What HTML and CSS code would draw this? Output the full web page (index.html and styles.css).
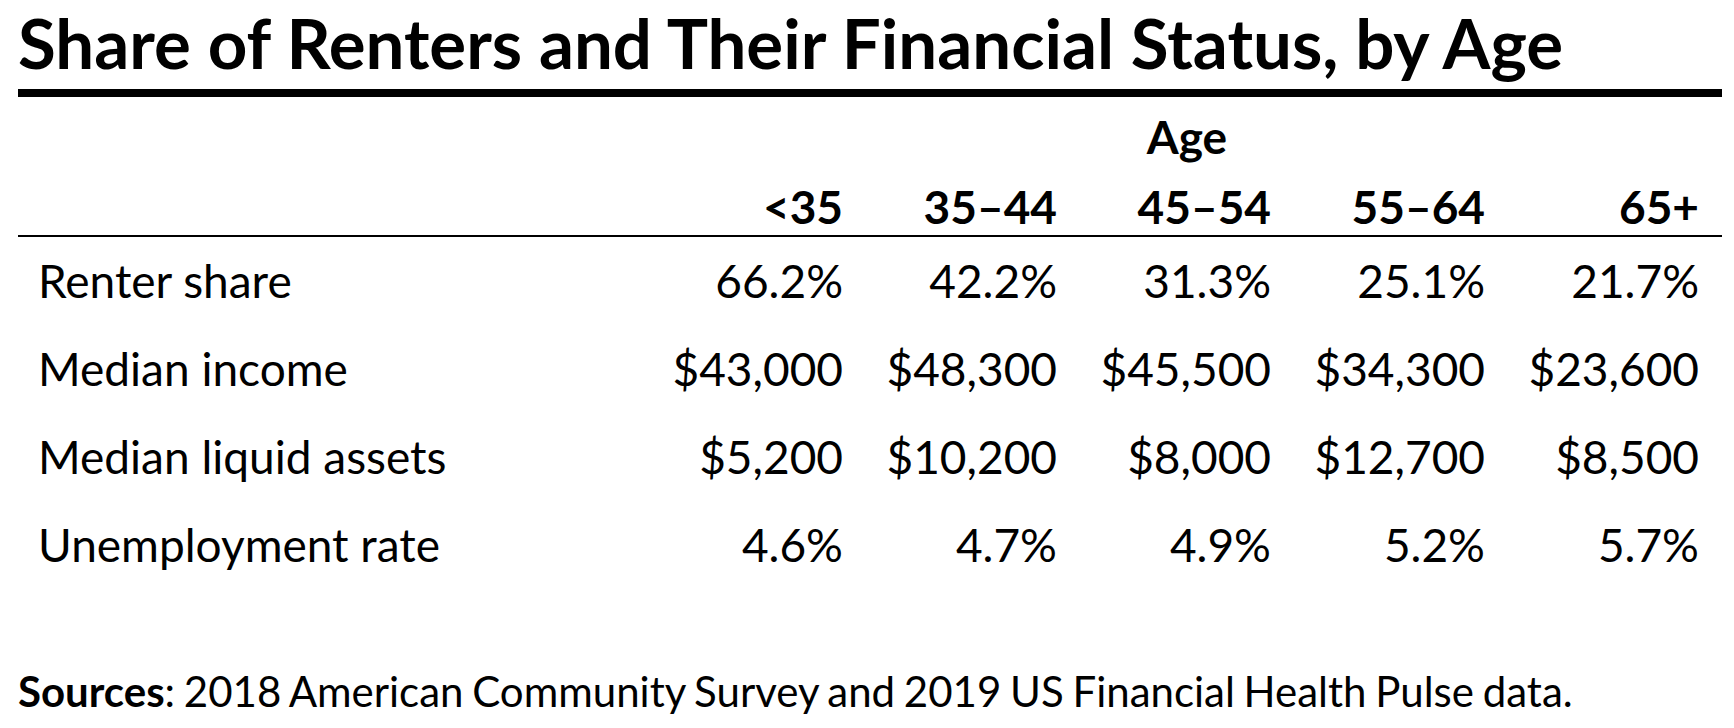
FILE: index.html
```html
<!DOCTYPE html>
<html lang="en">
<head>
<meta charset="utf-8">
<title>Share of Renters and Their Financial Status, by Age</title>
<link rel="stylesheet" href="styles.css">
</head>
<body>
<div class="page">
  <h1 class="title">Share of Renters and Their Financial Status, by Age</h1>
  <div class="rule"></div>
  <table class="data">
    <thead>
      <tr class="group-row">
        <th class="label-col"></th>
        <th class="group" colspan="5">Age</th>
      </tr>
      <tr class="head-row">
        <th class="label-col"></th>
        <th class="num">&lt;35</th>
        <th class="num">35–44</th>
        <th class="num">45–54</th>
        <th class="num">55–64</th>
        <th class="num">65+</th>
      </tr>
    </thead>
    <tbody>
      <tr>
        <td class="label">Renter share</td>
        <td class="num">66.2%</td>
        <td class="num">42.2%</td>
        <td class="num">31.3%</td>
        <td class="num">25.1%</td>
        <td class="num">21.7%</td>
      </tr>
      <tr>
        <td class="label">Median income</td>
        <td class="num">$43,000</td>
        <td class="num">$48,300</td>
        <td class="num">$45,500</td>
        <td class="num">$34,300</td>
        <td class="num">$23,600</td>
      </tr>
      <tr>
        <td class="label">Median liquid assets</td>
        <td class="num">$5,200</td>
        <td class="num">$10,200</td>
        <td class="num">$8,000</td>
        <td class="num">$12,700</td>
        <td class="num">$8,500</td>
      </tr>
      <tr>
        <td class="label">Unemployment rate</td>
        <td class="num">4.6%</td>
        <td class="num">4.7%</td>
        <td class="num">4.9%</td>
        <td class="num">5.2%</td>
        <td class="num">5.7%</td>
      </tr>
    </tbody>
  </table>
  <p class="source"><strong>Sources</strong>: 2018 American Community Survey and 2019 US Financial Health Pulse data.</p>
</div>
</body>
</html>
```
FILE: styles.css
```css
html, body {
  margin: 0;
  padding: 0;
  background: #ffffff;
}

body {
  font-family: Lato, "Liberation Sans", sans-serif;
  color: #000000;
}

.page {
  width: 1704px;
  margin-left: 18px;
  padding-top: 3px;
}

.title {
  margin: 0;
  font-size: 69px;
  font-weight: 700;
  line-height: 80px;
  white-space: nowrap;
}

.rule {
  height: 8px;
  background: #000000;
  margin-top: 6px;
}

.data {
  width: 1704px;
  border-collapse: collapse;
  table-layout: fixed;
  margin-top: 13px;
  font-size: 46px;
  line-height: 54px;
}

.data th,
.data td {
  padding: 0;
  white-space: nowrap;
}

.label-col {
  width: 634px;
}

.group-row th {
  padding-bottom: 16px;
}

.group {
  font-weight: 700;
  text-align: center;
}

.head-row th {
  font-weight: 700;
  border-bottom: 2px solid #000000;
  padding-bottom: 1px;
}

.num {
  width: 214px;
  text-align: right;
  padding-right: 23px !important;
  box-sizing: border-box;
}

.data tbody td {
  font-weight: 400;
  padding-top: 17px;
  padding-bottom: 17px;
}

.label {
  padding-left: 20px !important;
  text-align: left;
}

.source {
  margin: 77px 0 0 0;
  font-size: 42px;
  line-height: 50px;
  word-spacing: -2px;
  white-space: nowrap;
}

.source strong {
  font-weight: 700;
}
```
